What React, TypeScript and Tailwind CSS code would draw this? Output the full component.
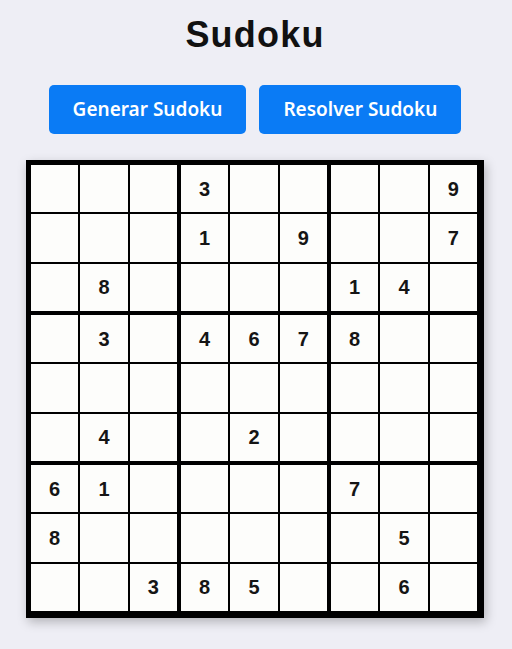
const puzzle: number[][] = [
  [0, 0, 0, 3, 0, 0, 0, 0, 9],
  [0, 0, 0, 1, 0, 9, 0, 0, 7],
  [0, 8, 0, 0, 0, 0, 1, 4, 0],
  [0, 3, 0, 4, 6, 7, 8, 0, 0],
  [0, 0, 0, 0, 0, 0, 0, 0, 0],
  [0, 4, 0, 0, 2, 0, 0, 0, 0],
  [6, 1, 0, 0, 0, 0, 7, 0, 0],
  [8, 0, 0, 0, 0, 0, 0, 5, 0],
  [0, 0, 3, 8, 5, 0, 0, 6, 0],
];

function Cell({ value, row, col }: { value: number; row: number; col: number }) {
  const thickRight = col % 3 === 2;
  const thickBottom = row % 3 === 2;
  return (
    <div
      className={[
        'flex items-center justify-center border border-black bg-[#fdfdfb] text-[20px] font-bold text-[#151515]',
        thickRight ? 'w-[51.33px] border-r-[3px]' : 'w-[49.33px]',
        thickBottom ? 'h-[51.33px] border-b-[3px]' : 'h-[49.33px]',
      ].join(' ')}
    >
      {value !== 0 ? value : ''}
    </div>
  );
}

export default function App() {
  return (
    <div className="flex min-h-[649px] flex-col items-center bg-[#eeeef5] pr-[2px] pt-[17px] font-['Liberation_Sans',Arial,sans-serif]">
      <h1 className="text-[36px] font-bold leading-none tracking-[1.2px] text-[#111]">Sudoku</h1>
      <div className="mt-[32px] flex gap-[13px] font-['Noto_Sans',sans-serif]">
        <button
          type="button"
          className="h-[49px] rounded-[5px] bg-[#0a7bf5] px-[24px] text-[19px] font-semibold text-white"
        >
          Generar Sudoku
        </button>
        <button
          type="button"
          className="h-[49px] rounded-[5px] bg-[#0a7bf5] px-[24px] text-[19px] font-semibold text-white"
        >
          Resolver Sudoku
        </button>
      </div>
      <div className="mt-[26px] grid grid-cols-[repeat(9,auto)] border-4 border-black shadow-[2px_4px_10px_rgba(0,0,0,0.25)]">
        {puzzle.map((row, r) => row.map((v, c) => <Cell key={`${r}-${c}`} value={v} row={r} col={c} />))}
      </div>
    </div>
  );
}
